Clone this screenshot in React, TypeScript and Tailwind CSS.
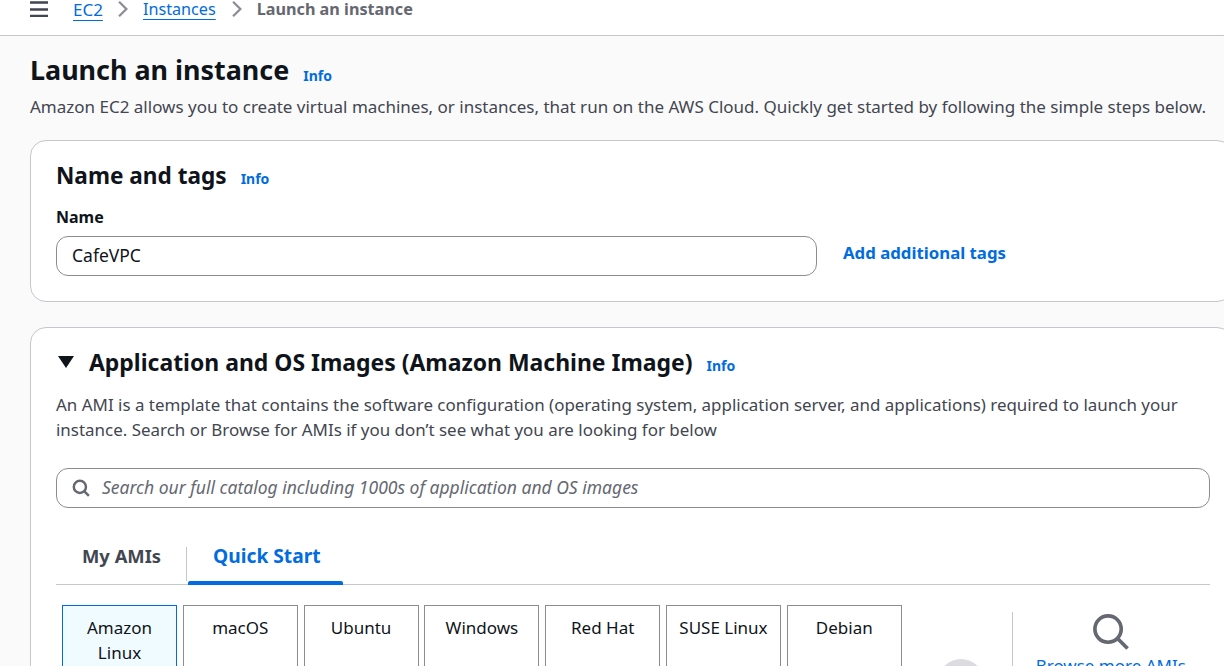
import React from 'react'

const font = { fontFamily: '"Noto Sans", sans-serif' }

const SearchIcon = ({ className, stroke = 2 }: { className: string; stroke?: number }) => (
  <svg viewBox="0 0 16 16" fill="none" className={className}>
    <circle cx="7" cy="7" r="5.4" stroke="#656871" strokeWidth={stroke} />
    <path d="M10.8 10.8L15 15" stroke="#656871" strokeWidth={stroke} />
  </svg>
)

const Chevron = () => (
  <svg viewBox="0 0 16 16" fill="none" className="w-[18px] h-[18px] flex-shrink-0">
    <path d="M4.5 1.5l6.5 6.5-6.5 6.5" stroke="#8c8c94" strokeWidth="2" />
  </svg>
)

const Info = ({ className }: { className: string }) => (
  <a className={`text-[14px] font-bold text-[#006ce0] leading-none ${className}`}>Info</a>
)

const osTabs = ['macOS', 'Ubuntu', 'Windows', 'Red Hat', 'SUSE Linux', 'Debian']

const App = () => {
  return (
    <div style={font} className="w-[1224px] h-[666px] overflow-hidden bg-[#fafafa] text-[#0f141a]">
      {/* top bar */}
      <div className="h-9 bg-white border-b border-[#c6c6cd] flex items-start pl-[30px]">
        <svg viewBox="0 0 18 16" className="w-[18px] h-[16px] mt-[1px] flex-shrink-0">
          <path d="M0 1.5h18M0 8.5h18M0 15h18" stroke="#424650" strokeWidth="2.4" />
        </svg>
        <div className="flex items-center text-[16.2px] leading-[17px] ml-[25px]">
          <a className="text-[17px] text-[#006ce0] underline underline-offset-[4px]">EC2</a>
          <span className="mx-[11px] flex"><Chevron /></span>
          <a className="text-[#006ce0] underline underline-offset-[4px]">Instances</a>
          <span className="ml-[12px] mr-[11px] flex"><Chevron /></span>
          <span className="font-bold text-[#656871]">Launch an instance</span>
        </div>
      </div>

      <div className="pl-[30px]">
        <div className="flex items-end mt-[16px] h-[36px]">
          <h1 className="text-[26.9px] leading-[36px] font-bold">Launch an instance</h1>
          <Info className="ml-[14px] mb-[5px]" />
        </div>
        <p className="text-[17px] leading-[20px] text-[#424650] mt-[9px] whitespace-nowrap">
          Amazon EC2 allows you to create virtual machines, or instances, that run on the AWS Cloud. Quickly get started by following the simple steps below.
        </p>

        {/* name and tags */}
        <div className="mt-[23px] h-[162px] bg-white border border-[#c6c6cd] rounded-[16px] pl-[25px] w-[1203px]">
          <div className="flex items-end mt-[19px] h-[32px]">
            <h2 className="text-[22.6px] leading-[32px] font-bold">Name and tags</h2>
            <Info className="ml-[14px] mb-[6px]" />
          </div>
          <div className="text-[16px] leading-[20px] font-bold mt-[15px]">Name</div>
          <div className="flex items-center mt-[9px]">
            <div className="w-[761px] h-[40px] border border-[#8c8c94] rounded-[12px] bg-white flex items-center pl-[15px] pb-[2px] text-[17.5px]">
              CafeVPC
            </div>
            <a className="ml-[26px] text-[16.8px] font-bold text-[#006ce0] -mt-[6px]">Add additional tags</a>
          </div>
        </div>

        {/* images */}
        <div className="mt-[25px] h-[400px] bg-white border border-[#c6c6cd] rounded-[16px] pl-[25px] w-[1203px]">
          <div className="flex items-center mt-[18px] h-[32px]">
            <svg viewBox="0 0 16 12" className="w-[16px] h-[12px] ml-[2px] flex-shrink-0">
              <path d="M0 0h16L8 12z" fill="#0f141a" />
            </svg>
            <h2 className="text-[22.95px] leading-[32px] font-bold ml-[15px]">Application and OS Images (Amazon Machine Image)</h2>
            <Info className="ml-[14px] mt-[8px]" />
          </div>
          <p className="text-[16.95px] leading-[25px] text-[#424650] mt-[14px] w-[1140px]">
            An AMI is a template that contains the software configuration (operating system, application server, and applications) required to launch your instance. Search or Browse for AMIs if you don’t see what you are looking for below
          </p>
          <div className="w-[1154px] h-[40px] border border-[#8c8c94] rounded-[12px] mt-[26px] flex items-center pl-[15px]">
            <SearchIcon className="w-[18px] h-[18px] flex-shrink-0" stroke={2.2} />
            <span className="ml-[12px] pb-[2px] italic text-[17.5px] text-[#656871]">Search our full catalog including 1000s of application and OS images</span>
          </div>

          {/* tabs */}
          <div className="w-[1154px] h-[57px] border-b border-[#c6c6cd] mt-[20px] flex items-stretch">
            <div className="flex items-center pl-[26px] pr-[25px] text-[18.4px] font-bold text-[#424650]">My AMIs</div>
            <div className="relative flex items-center pl-[27px] pr-[22px] text-[19.2px] font-bold text-[#006ce0]">
              <span className="absolute left-0 top-[19px] h-[34px] w-px bg-[#c6c6cd]" />
              Quick Start
              <span className="absolute left-[2px] right-0 -bottom-[1px] h-[4px] rounded-t-[2px] bg-[#006ce0]" />
            </div>
          </div>

          {/* os tiles */}
          <div className="flex mt-[20px] ml-[6px]">
            <div className="w-[115px] h-[100px] border border-[#006ce0] bg-[#f0fbff] text-center text-[17px] leading-[25px] pt-[9px] flex-shrink-0">
              Amazon<br />Linux
            </div>
            {osTabs.map((os) => (
              <div key={os} className="w-[115px] h-[100px] ml-[5.8px] border border-[#8c8c94] bg-white text-center text-[17px] leading-[25px] pt-[9px] flex-shrink-0 whitespace-nowrap">
                {os}
              </div>
            ))}
            <div className="w-[46px] h-[46px] rounded-full bg-[#dbdbe0] ml-[36px] mt-[54px] flex-shrink-0" />
            <div className="ml-[28px] mt-[7px] h-[93px] border-l border-[#c6c6cd] w-[197px] flex-shrink-0 flex flex-col items-center">
              <SearchIcon className="w-[39px] h-[39px]" stroke={1.5} />
              <a className="text-[17px] text-[#006ce0] mt-[2px] underline whitespace-nowrap">Browse more AMIs</a>
            </div>
          </div>
        </div>
      </div>
    </div>
  )
}

export default App
